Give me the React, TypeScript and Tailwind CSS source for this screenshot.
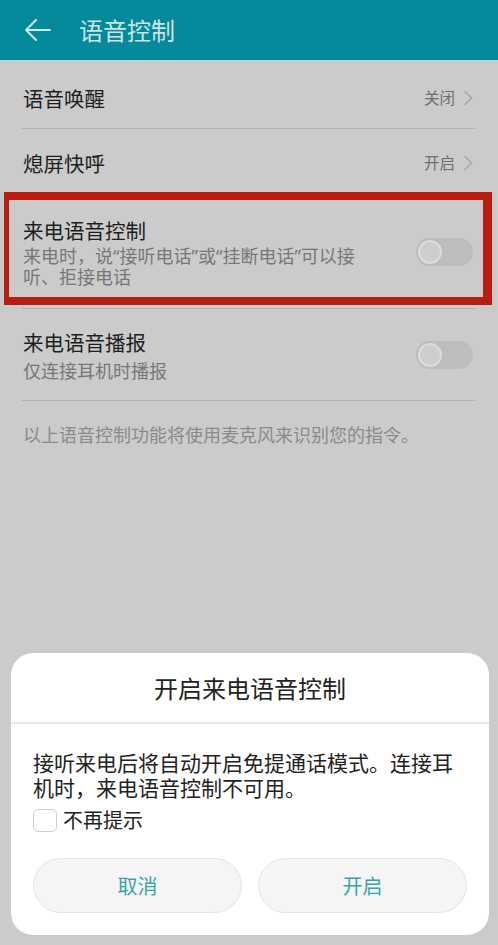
import React from "react";

const font = { fontFamily: '"Noto Sans CJK SC", "Noto Sans", sans-serif' };
const mixFont = { fontFamily: '"Noto Sans", "Noto Sans CJK SC", sans-serif' };

function Chevron() {
  return (
    <svg width="10" height="16" viewBox="0 0 10 16" className="ml-[8px]">
      <polyline points="2,1.5 8.5,8 2,14.5" fill="none" stroke="#a6a6a6" strokeWidth="1.5" strokeLinejoin="round" strokeLinecap="round" />
    </svg>
  );
}

function Toggle() {
  return (
    <div className="flex h-[28px] w-[57px] shrink-0 items-center rounded-full bg-[#bdbdbd] px-[2px]">
      <div className="h-[24px] w-[24px] rounded-full border-2 border-[#dcdcdc] bg-[#cecece]" />
    </div>
  );
}

function Divider() {
  return <div className="mx-[22px] h-px bg-[#b3b3b3]" />;
}

export default function App() {
  return (
    <div className="relative h-[945px] w-[498px] overflow-hidden bg-[#cbcbcb]" style={font}>
      {/* header */}
      <div className="flex h-[60px] items-center bg-[#048a9a]">
        <svg width="30" height="24" viewBox="0 0 30 24" className="ml-[23px]">
          <path d="M3 12 H27 M3 12 L13 2 M3 12 L13 22" fill="none" stroke="#d3e7ea" strokeWidth="2" strokeLinecap="round" strokeLinejoin="round" />
        </svg>
        <div className="ml-[26px] text-[24px] leading-none text-[#cde4e7]">语音控制</div>
      </div>
      <div className="h-[3px] bg-[#bcd2d5]" />

      {/* row 1 */}
      <div className="flex h-[65px] items-center pl-[23px] pr-[25px] pt-[4px]">
        <div className="flex-1 text-[20.5px] leading-[26px] text-[#1e1e1e]">语音唤醒</div>
        <div className="text-[15.5px] text-[#6e6e6e]">关闭</div>
        <Chevron />
      </div>
      <Divider />

      {/* row 2 */}
      <div className="flex h-[67px] items-center pl-[23px] pr-[25px]">
        <div className="flex-1 text-[20.5px] leading-[26px] text-[#1e1e1e]">熄屏快呼</div>
        <div className="text-[15.5px] text-[#6e6e6e]">开启</div>
        <Chevron />
      </div>

      {/* row 3 with annotation */}
      <div className="relative">
        <div className="flex h-[112px] items-center pl-[23px] pr-[25px]">
          <div className="flex-1">
            <div className="text-[20.5px] leading-[26px] text-[#1e1e1e]">来电语音控制</div>
            <div className="mt-[3px] w-[345px] text-[18px] leading-[21px] text-[#777777]" style={mixFont}>
              来电时，说“接听电话”或“挂断电话”可以接听、拒接电话
            </div>
          </div>
          <Toggle />
        </div>
        <div className="pointer-events-none absolute left-[4px] top-[-4px] h-[113px] w-[488px] border-y-[8px] border-l-[5px] border-r-[9px] border-[#b91c10]" />
      </div>
      <Divider />

      {/* row 4 */}
      <div className="flex h-[91px] items-center pl-[23px] pr-[25px]">
        <div className="flex-1">
          <div className="text-[20.5px] leading-[26px] text-[#1e1e1e]">来电语音播报</div>
          <div className="mt-[5px] text-[18px] leading-[21px] text-[#777777]">仅连接耳机时播报</div>
        </div>
        <Toggle />
      </div>
      <Divider />

      <div className="pl-[23px] pt-[22px] text-[18px] leading-[22px] text-[#8a8a8a]">
        以上语音控制功能将使用麦克风来识别您的指令。
      </div>

      {/* dialog */}
      <div className="absolute bottom-[10px] left-[11px] w-[478px] rounded-[22px] bg-white">
        <div className="flex h-[69px] items-center justify-center text-[24px] text-[#222222]">开启来电语音控制</div>
        <div className="h-[2px] bg-[#e8e8e8]" />
        <div className="px-[22px] pb-[22px] pt-[26px]">
          <div className="text-[21px] leading-[25px] text-[#222222]">
            接听来电后将自动开启免提通话模式。连接耳机时，来电语音控制不可用。
          </div>
          <div className="mt-[7px] flex h-[26px] items-center">
            <div className="h-[23px] w-[24px] rounded-[5px] border border-[#cfcfcf] bg-white" />
            <div className="ml-[6px] text-[20px] leading-[26px] text-[#222222]">不再提示</div>
          </div>
          <div className="mt-[25px] flex gap-[16px]">
            <div className="flex h-[55px] flex-1 items-center justify-center rounded-full border border-[#e4e4e4] bg-[#f5f5f5] text-[20px] text-[#3aa4aa]">取消</div>
            <div className="flex h-[55px] flex-1 items-center justify-center rounded-full border border-[#e4e4e4] bg-[#f5f5f5] text-[20px] text-[#3aa4aa]">开启</div>
          </div>
        </div>
      </div>
    </div>
  );
}
